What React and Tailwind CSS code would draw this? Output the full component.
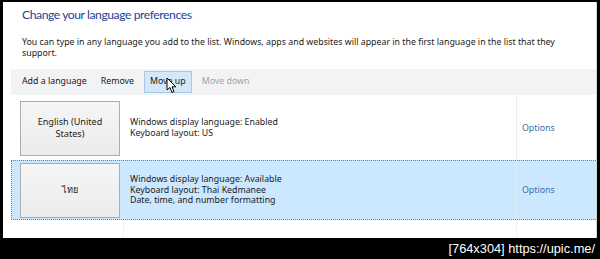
import React from 'react';

const Tile = ({ children }) => (
  <div className="w-[100px] h-[55px] shrink-0 flex items-center justify-center text-center border border-[#adadad] bg-gradient-to-b from-[#f6f6f6] to-[#ebebeb] text-[9.1px] leading-[12px] text-[#222]">
    {children}
  </div>
);

const App = () => {
  return (
    <div className="w-[600px] h-[259px] bg-black flex flex-col overflow-hidden font-['Noto_Sans',sans-serif]">
      {/* Control panel page */}
      <div className="relative ml-[3px] mt-[2px] w-[594px] h-[236px] shrink-0 bg-white border-r border-[#d6d6d6] flex flex-col">
        <h1 className="pl-[19px] pt-[3px] text-[12.2px] leading-[20px] tracking-[-0.45px] font-['Lato',sans-serif] text-[#1f4496] whitespace-nowrap">
          Change your language preferences
        </h1>
        <p className="pl-[19px] mt-[11.5px] text-[8.8px] leading-[11px] text-[#1a1a1a] whitespace-nowrap">
          You can type in any language you add to the list. Windows, apps and websites will appear in the first language in the list that they
          <br />
          support.
        </p>

        {/* Toolbar */}
        <div className="ml-[8px] mt-[10.5px] h-[26px] bg-[#f2f3f5] flex items-center text-[8.8px] text-[#1a1a1a] whitespace-nowrap">
          <span className="ml-[11px]">Add a language</span>
          <span className="ml-[14px]">Remove</span>
          <span className="ml-[10px] h-[22px] px-[5px] flex items-center bg-[#d5e8f8] border border-[#a3c8ea]">Move up</span>
          <span className="ml-[10px] text-[#a3a3a3]">Move down</span>
        </div>

        {/* Language list */}
        <div className="ml-[8px] flex-1 flex flex-col">
          <div className="mt-[1px] h-[64px] flex items-center pl-[9px] text-[8.8px] leading-[11px] text-[#1a1a1a]">
            <Tile>
              English (United
              <br />
              States)
            </Tile>
            <div className="ml-[10px] flex-1 whitespace-nowrap">
              Windows display language: Enabled
              <br />
              Keyboard layout: US
            </div>
            <div className="w-[80px] self-stretch border-l border-[#ececec] flex items-center pl-[5px] text-[#3a6ea8]">
              Options
            </div>
          </div>

          <div className="h-[60px] flex items-center pl-[8px] bg-[#cce8ff] border border-r-0 border-dotted border-[#6f8192] text-[8.8px] leading-[10.5px] text-[#1a1a1a]">
            <Tile>ไทย</Tile>
            <div className="ml-[10px] flex-1 whitespace-nowrap">
              Windows display language: Available
              <br />
              Keyboard layout: Thai Kedmanee
              <br />
              Date, time, and number formatting
            </div>
            <div className="w-[80px] self-stretch border-l border-[#dcebf8] flex items-center pl-[5px] text-[#3a6ea8]">
              Options
            </div>
          </div>

          <div className="flex-1 flex">
            <div className="w-[113px] border-r border-[#f1f1f1]" />
            <div className="flex-1" />
            <div className="w-[80px] border-l border-[#f1f1f1]" />
          </div>
        </div>

        {/* Mouse pointer */}
        <svg className="absolute left-[163px] top-[75px]" width="11" height="17" viewBox="0 0 11 17">
          <path d="M1 1 L1 13 L4 10.5 L6 15.5 L8 14.6 L6 9.8 L9.8 9.8 Z" fill="#fff" stroke="#000" strokeWidth="1" strokeLinejoin="round" />
        </svg>
      </div>

      {/* Watermark bar */}
      <div className="flex-1 flex items-center justify-end pr-[5px] text-white text-[12.8px] font-['Liberation_Sans',sans-serif]">
        [764x304] https://upic.me/
      </div>
    </div>
  );
};

export default App;
